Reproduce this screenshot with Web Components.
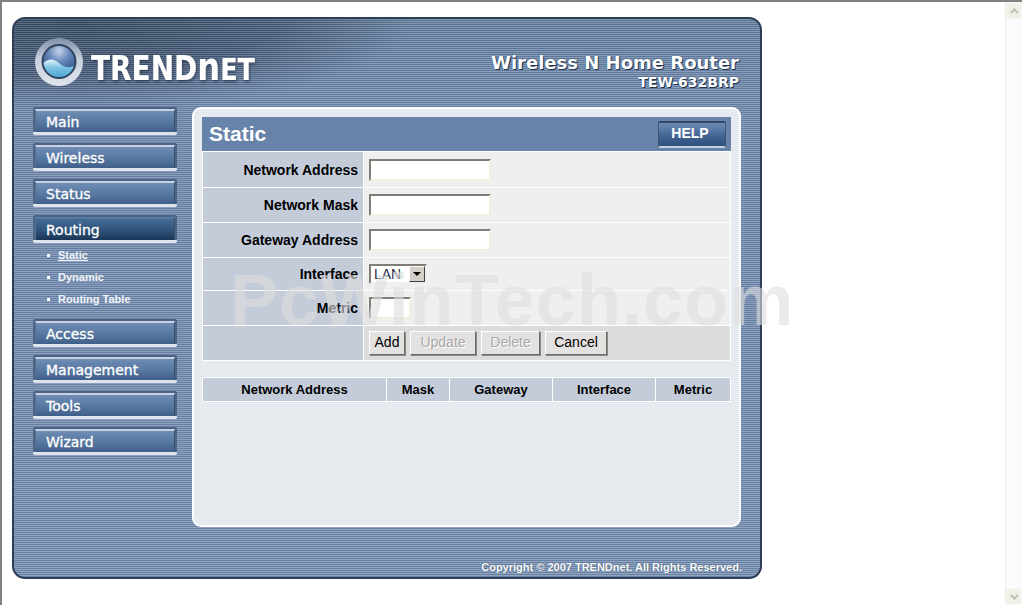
<!DOCTYPE html>
<html><head><meta charset="utf-8"><style>
html,body{margin:0;height:100%;overflow:hidden;background:#fff;font-family:"Liberation Sans",Arial,sans-serif}
</style></head><body>
<router-page></router-page>
<script>
function def(name, css, html){
  customElements.define(name, class extends HTMLElement{
    constructor(){super();const r=this.attachShadow({mode:'open'});r.innerHTML='<style>'+css+'</style>'+html;}
  });
}
const sans='"Liberation Sans",Arial,sans-serif', disp='"DejaVu Sans",Verdana,sans-serif';

def('nav-btn',`
:host{display:block;height:28px;box-sizing:border-box;border-radius:2px;padding:2px 2px 0 2px;background:#4d6484;border-bottom:3px solid #dfe5ee;font:14px ${disp};color:#fff;-webkit-text-stroke:.3px #fff}
.b{height:23px;box-sizing:border-box;padding:1px 0 0 10px;line-height:21px;background:linear-gradient(#6f8db5,#56779f 55%,#3f5f8a);border-top:2px solid #c6d2e2;border-left:1px solid #54708f;border-right:1px solid #35506f;white-space:nowrap}
:host([active]) .b{background:linear-gradient(#456c96,#2f5379 55%,#1a3556);border-top:2px solid #557ba3}
`,`<div class="b"><slot></slot></div>`);

def('sub-item',`
:host{display:flex;align-items:center;height:22px;gap:8px;padding-left:14px;font:bold 11px ${sans};color:#f2f5f9;white-space:nowrap}
i{width:3px;height:3px;background:#fff;flex:none}
:host([current]) span{text-decoration:underline}
`,`<i></i><span><slot></slot></span>`);

def('side-nav',`
:host{display:flex;flex-direction:column;gap:8px;width:144px}
.subs{margin:-7px 0 1px}
`,`<nav-btn>Main</nav-btn><nav-btn>Wireless</nav-btn><nav-btn>Status</nav-btn><nav-btn active>Routing</nav-btn>
<div class="subs"><sub-item current>Static</sub-item><sub-item>Dynamic</sub-item><sub-item>Routing Table</sub-item></div>
<nav-btn>Access</nav-btn><nav-btn>Management</nav-btn><nav-btn>Tools</nav-btn><nav-btn>Wizard</nav-btn>`);

def('brand-logo',`
:host{display:block;width:232px;height:54px}
svg{display:block}
text{font-family:${disp};font-weight:bold;fill:#fff}
`,`<svg width="232" height="54" viewBox="0 0 232 54">
<defs>
<linearGradient id="ring" x1="0" y1="0" x2="0" y2="1"><stop offset="0" stop-color="#7e8fa8"/><stop offset=".45" stop-color="#c9d1de"/><stop offset="1" stop-color="#dfe4ec"/></linearGradient>
<radialGradient id="sph" cx=".5" cy=".18" r=".8"><stop offset="0" stop-color="#c5d2e6"/><stop offset=".45" stop-color="#5f83b8"/><stop offset="1" stop-color="#2c4b80"/></radialGradient>
<linearGradient id="wav" x1="0" y1="0" x2="0" y2="1"><stop offset="0" stop-color="#e7f3f9"/><stop offset=".4" stop-color="#7cc3e4"/><stop offset="1" stop-color="#3f9fcf"/></linearGradient>
<filter id="sh" x="-5%" y="-10%" width="110%" height="130%"><feDropShadow dx="1" dy="2" stdDeviation="1.5" flood-color="#27364c" flood-opacity=".7"/></filter>
</defs>
<circle cx="24" cy="24" r="24" fill="url(#ring)"/>
<circle cx="24" cy="23.5" r="17.5" fill="#33445e"/>
<clipPath id="c"><circle cx="24" cy="23.5" r="15.5"/></clipPath>
<g clip-path="url(#c)"><rect x="8" y="7" width="32" height="33" fill="url(#sph)"/>
<path d="M6 27C13 20 18 20 24 25S34 31 42 26V42H6Z" fill="url(#wav)"/></g>
<g filter="url(#sh)"><text x="56" y="42" font-size="34" textLength="164" lengthAdjust="spacingAndGlyphs">TREND<tspan font-size="39">n</tspan><tspan font-size="31">ET</tspan></text></g>
</svg>`);

def('router-title',`
:host{display:block;text-align:right;color:#fff;font-family:${disp};font-weight:bold;text-shadow:1px 1px 0 #24344c,0 0 1px #24344c}
.a{font-size:18px;line-height:22px;white-space:nowrap}
.b{font-size:14px;line-height:17px;white-space:nowrap}
`,`<div class="a">Wireless N Home Router</div><div class="b">TEW-632BRP</div>`);

def('help-btn',`
:host{display:block;width:68px;height:27px;box-sizing:border-box;border-radius:2px;background:linear-gradient(#6e8cb4,#3f6291 60%,#2f4f7c);border:1px solid #3b5474;border-top:2px solid #31486a;border-bottom:2px solid #c4d0e0;color:#fff;font:bold 14px/20px ${sans};text-align:center;padding-right:4px}
`,`<slot></slot>`);

def('form-row',`
:host{display:grid;grid-template-columns:160px 1fr;gap:1px;height:var(--h,34px);border-top:1px solid transparent}
.l{background:#c4ccda;display:flex;align-items:center;justify-content:flex-end;padding-right:5px;font:bold 14px ${sans};color:#000;white-space:nowrap}
.v{background:var(--v,#efefef);display:flex;align-items:center;padding-left:5px;gap:4px}
`,`<div class="l"><slot name="l"></slot></div><div class="v"><slot></slot></div>`);

def('text-box',`
:host{display:block;height:22px;box-sizing:border-box;background:#fff;border:2px solid;border-color:#7f7d75 #f1efe2 #f1efe2 #7f7d75;width:var(--w,122px)}
`,``);

def('sel-box',`
:host{display:flex;width:58px;height:20px;box-sizing:border-box;background:#fff;border:2px solid;border-color:#7f7d75 #eeeeee #eeeeee #7f7d75;font:14px ${sans};color:#1f2a44;align-items:center;padding-left:3px;position:relative}
b{position:absolute;right:0;top:0;bottom:0;width:16px;background:#d4d0c8;border:1px solid;box-sizing:border-box;border-color:#fff #404040 #404040 #fff;display:flex;align-items:center;justify-content:center}
b::after{content:"";border:4px solid transparent;border-top:4px solid #000;border-bottom:0}
`,`<slot></slot><b></b>`);

def('push-btn',`
:host{display:block;height:24px;box-sizing:border-box;margin-right:1px;background:#e4e2e0;border:1px solid;border-color:#fff #6b6b66 #6b6b66 #fff;box-shadow:1px 1px 0 #8a8a84;font:14px/21px ${sans};color:#000;text-align:center;width:var(--w,60px)}
:host([disabled]){color:#a8a8a8;text-shadow:1px 1px 0 #fff}
`,`<slot></slot>`);

def('static-form',`
:host{display:block;background:#fff;padding:0 1px 1px}
`,`<form-row style="--h:35px"><span slot="l">Network Address</span><text-box></text-box></form-row>
<form-row style="--h:34px"><span slot="l">Network Mask</span><text-box></text-box></form-row>
<form-row style="--h:34px"><span slot="l">Gateway Address</span><text-box></text-box></form-row>
<form-row style="--h:32px"><span slot="l">Interface</span><sel-box>LAN</sel-box></form-row>
<form-row style="--h:34px"><span slot="l">Metric</span><text-box style="--w:42px"></text-box></form-row>
<form-row style="--h:34px;--v:#dcdcdc"><span slot="l"></span><push-btn style="--w:36px">Add</push-btn><push-btn disabled style="--w:66px">Update</push-btn><push-btn disabled style="--w:59px">Delete</push-btn><push-btn style="--w:62px">Cancel</push-btn></form-row>`);

def('route-table',`
:host{display:grid;grid-template-columns:183px 62px 102px 102px 1fr;gap:1px;margin-top:16px;font:bold 13px ${sans};color:#000;padding:1px;box-sizing:border-box;background:#fff;height:25px}
div{background:#c4ccda;display:flex;align-items:center;justify-content:center;white-space:nowrap}
`,`<div>Network Address</div><div>Mask</div><div>Gateway</div><div>Interface</div><div>Metric</div>`);

def('content-card',`
:host{display:block;width:549px;height:420px;box-sizing:border-box;border-radius:9px;border:2px solid #fff;padding:8px 8px 0;background:repeating-linear-gradient(#e9edf1 0 1px,#e3e8ee 1px 2px)}
.t{height:34px;background:#6783a9;display:flex;align-items:center;justify-content:space-between;padding:0 5px 0 7px;color:#fff;font:bold 21px ${sans}}
`,`<div class="t"><span>Static</span><help-btn>HELP</help-btn></div><static-form></static-form><route-table></route-table>`);

def('router-panel',`
:host{display:flex;flex-direction:column;width:750px;height:562px;box-sizing:border-box;border:2px solid #2c3e56;border-radius:13px;overflow:hidden;color:#fff;
background:repeating-linear-gradient(rgba(255,255,255,.19) 0 1px,rgba(20,40,70,.14) 1px 2px),radial-gradient(ellipse 340px 90px at 60px 0,#34475f 0,#465a76 60%,rgba(70,90,118,0) 100%),linear-gradient(#66809f 0,#7089ad 70px,#7790b3 100%)}
.top{height:88px;flex:none;display:flex;justify-content:space-between;padding:19px 21px 0 21px;box-sizing:border-box}
router-title{margin-top:14px}
.mid{display:flex;gap:15px;padding-left:19px;align-items:flex-start}
.foot{margin-top:auto;height:16px;font:bold 11px ${sans};text-align:right;padding-right:18px;color:#fff;text-shadow:0 0 1px #2c3e56;white-space:nowrap}
`,`<div class="top"><brand-logo></brand-logo><router-title></router-title></div>
<div class="mid"><side-nav></side-nav><content-card></content-card></div>
<div class="foot">Copyright © 2007 TRENDnet. All Rights Reserved.</div>`);

def('scroll-rail',`
:host{display:flex;flex-direction:column;justify-content:space-between;width:17px;box-sizing:border-box;background:#fbfbfe;border-left:1px solid #ecebe4}
.a{height:17px;background:#f0efe8;border:1px solid #f8f8f4;box-sizing:border-box;display:flex;align-items:center;justify-content:center}
svg{display:block}
`,`<div class="a"><svg width="9" height="6"><path d="M1 5L4.5 1.5L8 5" fill="none" stroke="#c0bfb6" stroke-width="2"/></svg></div>
<div class="a"><svg width="9" height="6"><path d="M1 1L4.5 4.5L8 1" fill="none" stroke="#c0bfb6" stroke-width="2"/></svg></div>`);

def('router-page',`
:host{display:flex;width:1022px;height:605px;box-sizing:border-box;border-top:2px solid #808080;border-left:2px solid #808080;position:relative;overflow:hidden}
.view{flex:1;padding:15px 0 0 10px;box-sizing:border-box;min-width:0}
.wm{position:absolute;left:228px;top:262px;font:bold 72px/72px ${sans};letter-spacing:1.1px;color:rgba(222,222,222,.6);white-space:nowrap;pointer-events:none}
`,`<div class="view"><router-panel></router-panel></div><scroll-rail></scroll-rail><div class="wm">PcWinTech.com</div>`);
</script>
</body></html>
